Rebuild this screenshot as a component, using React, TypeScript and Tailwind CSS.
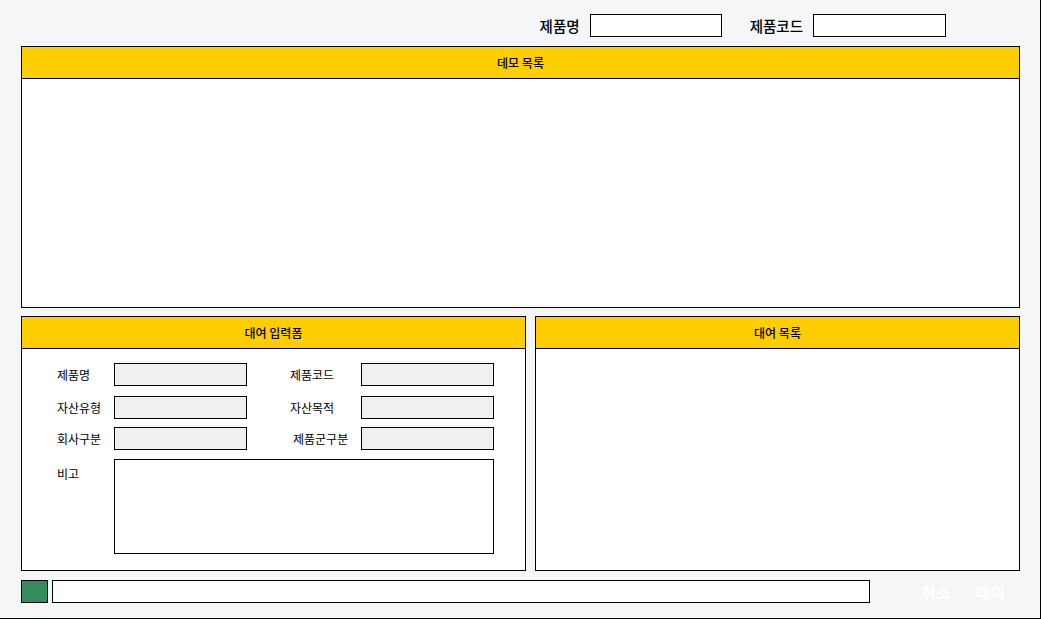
import { ReactNode } from 'react'

const font = { fontFamily: '"Noto Sans CJK KR", "Noto Sans", sans-serif' }

function Panel({ title, className, children }: { title: string; className?: string; children?: ReactNode }) {
  return (
    <div className={`flex flex-col border border-black bg-white ${className ?? ''}`}>
      <div className="flex h-[32px] shrink-0 items-center justify-center border-b border-black bg-[#ffce00] text-[12px] font-medium text-black">
        {title}
      </div>
      <div className="flex-1">{children}</div>
    </div>
  )
}

function Field({ label, className }: { label: string; className?: string }) {
  return (
    <>
      <span className={`text-[12px] text-black ${className ?? ''}`}>{label}</span>
      <input readOnly className="h-[23px] w-[133px] border border-black bg-[#f0f0f0] outline-none" />
    </>
  )
}

export default function App() {
  return (
    <div style={font} className="h-[619px] w-[1041px] border-r border-b border-black bg-[#f5f6f8]">
      <div className="flex flex-col pl-[21px] pr-[20px] pt-[14px]">
        {/* search bar */}
        <div className="flex h-[23px] items-center justify-end gap-[10px] pr-[74px]">
          <span className="text-[14.5px] font-medium text-black">제품명</span>
          <input className="h-[23px] w-[132px] border border-black bg-white outline-none" />
          <span className="ml-[18px] text-[14.5px] font-medium text-black">제품코드</span>
          <input className="h-[23px] w-[133px] border border-black bg-white outline-none" />
        </div>

        <Panel title="데모 목록" className="mt-[9px] h-[262px]" />

        <div className="mt-[8px] flex h-[255px] gap-[9px]">
          <Panel title="대여 입력폼" className="w-[505px]">
            <div className="grid grid-cols-[57px_133px_43px_71px_133px] items-center pl-[35px] pt-[14px]">
              <Field label="제품명" />
              <span />
              <Field label="제품코드" />
              <div className="col-span-5 h-[10px]" />
              <Field label="자산유형" />
              <span />
              <Field label="자산목적" />
              <div className="col-span-5 h-[8px]" />
              <Field label="회사구분" />
              <span />
              <Field label="제품군구분" className="ml-[3px]" />
              <div className="col-span-5 h-[9px]" />
              <span className="self-start pt-[6px] text-[12px] text-black">비고</span>
              <textarea readOnly className="col-span-4 h-[95px] w-[380px] resize-none border border-black bg-white outline-none" />
            </div>
          </Panel>
          <Panel title="대여 목록" className="w-[485px]" />
        </div>

        <div className="mt-[9px] flex h-[23px] items-center">
          <div className="h-[23px] w-[27px] border border-black bg-[#348c5c]" />
          <input className="ml-[4px] h-[23px] w-[818px] border border-black bg-white outline-none" />
          <button className="ml-[51px] text-[16px] font-bold text-white">취소</button>
          <button className="ml-[25px] text-[16px] font-bold text-white">대여</button>
        </div>
      </div>
    </div>
  )
}
